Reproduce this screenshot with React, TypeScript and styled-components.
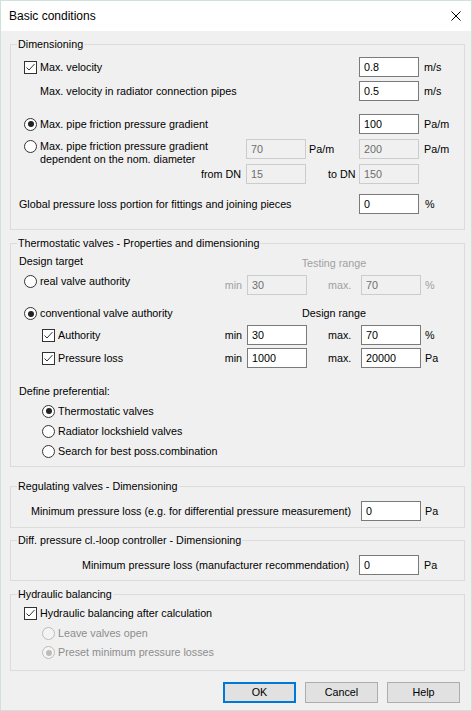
import React from 'react';
import styled, { createGlobalStyle, css } from 'styled-components';

const GlobalStyle = createGlobalStyle`
  html, body {
    margin: 0;
    padding: 0;
    background: #f0f0f0;
  }
  body {
    font-family: "Liberation Sans", Arial, sans-serif;
    font-size: 10.75px;
    line-height: 13px;
    color: #000;
  }
  * { box-sizing: border-box; }
`;

const DIM_COLS = '1fr 60px 53px 60px 45px';
const TRV_COLS = '1fr 60px 54px 60px 43px';

const Window = styled.div`
  width: 472px;
  height: 711px;
  overflow: hidden;
  border: 1px solid #cfe2d9;
  background: #f0f0f0;
  display: flex;
  flex-direction: column;
`;

const TitleBar = styled.div`
  flex: none;
  height: 30px;
  background: #fff;
  display: flex;
  align-items: center;
  justify-content: space-between;
  padding: 0 10px 0 8px;
  font-size: 12px;
`;

const Body = styled.div`
  padding: 7px 6px 0 9px;
  display: flex;
  flex-direction: column;
`;

const Group = styled.fieldset<{ $mt?: number; $pb: number }>`
  margin: ${p => p.$mt ?? 0}px 0 0 0;
  padding: 0 0 ${p => p.$pb}px 8px;
  border: 1px solid #dcdcdc;
  min-width: 0;
  display: flex;
  flex-direction: column;
`;

const Legend = styled.legend`
  padding: 0 1px;
  margin-left: -2px;
  line-height: 13px;
`;

const Row = styled.div<{ $cols: string; $mt?: number; $rows?: string }>`
  display: grid;
  grid-template-columns: ${p => p.$cols};
  grid-template-rows: ${p => p.$rows ?? '20px'};
  row-gap: 5px;
  align-items: center;
  margin-top: ${p => p.$mt ?? 0}px;
`;

const Line = styled.div<{ $mt?: number; $h?: number }>`
  display: flex;
  align-items: center;
  height: ${p => p.$h ?? 20}px;
  margin-top: ${p => p.$mt ?? 0}px;
`;

const EndLine = styled.div<{ $mt: number }>`
  display: flex;
  align-items: center;
  justify-content: flex-end;
  height: 20px;
  margin-top: ${p => p.$mt}px;
`;

const Text = styled.span<{ $indent?: number; $span?: string }>`
  margin-left: ${p => p.$indent ?? 0}px;
  grid-column: ${p => p.$span ?? 'auto'};
  white-space: nowrap;
`;

const Choice = styled.label<{ $indent: number; $span?: string; $area?: string; $top?: number; $off?: boolean }>`
  display: flex;
  align-items: flex-start;
  gap: 3px;
  margin-left: ${p => p.$indent}px;
  margin-top: ${p => p.$top ?? 0}px;
  color: ${p => (p.$off ? '#8d8d8d' : '#000')};
  white-space: nowrap;
  ${p => p.$span && css`grid-column: ${p.$span};`}
  ${p => p.$area && css`
    grid-area: ${p.$area};
    align-self: start;
  `}
`;

const Box = styled.span`
  width: 13px;
  height: 13px;
  flex: none;
  border: 1px solid #333;
  background: #fff;
  display: flex;
  align-items: center;
  justify-content: center;
`;

const Round = styled.span<{ $off?: boolean }>`
  width: 13px;
  height: 13px;
  flex: none;
  border-radius: 50%;
  border: 1px solid ${p => (p.$off ? '#bcbcbc' : '#333')};
  background: ${p => (p.$off ? '#f4f4f4' : '#fff')};
  display: flex;
  align-items: center;
  justify-content: center;
`;

const Dot = styled.span<{ $off?: boolean }>`
  width: 6px;
  height: 6px;
  border-radius: 50%;
  background: ${p => (p.$off ? '#bcbcbc' : '#222')};
`;

const Field = styled.input<{ $off?: boolean; $col?: number; $row?: number; $ml?: number }>`
  width: 60px;
  height: 20px;
  margin: 0 0 0 ${p => p.$ml ?? 0}px;
  padding: 0 0 0 4px;
  border: 1px solid ${p => (p.$off ? '#cccccc' : '#7a7a7a')};
  background: ${p => (p.$off ? '#f0f0f0' : '#fff')};
  color: ${p => (p.$off ? '#6d6d6d' : '#000')};
  font: inherit;
  outline: none;
  grid-column: ${p => p.$col ?? 'auto'};
  grid-row: ${p => p.$row ?? 'auto'};
`;

const Unit = styled.span<{ $pl: number; $dim?: boolean; $w?: number; $col?: number; $row?: number }>`
  padding-left: ${p => p.$pl}px;
  width: ${p => (p.$w ? `${p.$w}px` : 'auto')};
  color: ${p => (p.$dim ? '#a0a0a0' : '#000')};
  white-space: nowrap;
  grid-column: ${p => p.$col ?? 'auto'};
  grid-row: ${p => p.$row ?? 'auto'};
`;

const Side = styled.span<{ $dim?: boolean; $row?: number }>`
  justify-self: end;
  padding-right: 5px;
  grid-row: ${p => p.$row ?? 1};
  grid-column: 1;
  color: ${p => (p.$dim ? '#a0a0a0' : '#000')};
`;

const Caption = styled.span<{ $mt?: number; $dim?: boolean }>`
  grid-column: 2 / 5;
  grid-row: 1;
  justify-self: center;
  color: ${p => (p.$dim ? '#a0a0a0' : '#000')};
  margin-top: ${p => p.$mt ?? 0}px;
`;

const Buttons = styled.div`
  display: flex;
  justify-content: flex-end;
  gap: 9px;
  margin-top: 11px;
  padding-right: 5px;
`;

const Button = styled.button<{ $primary?: boolean }>`
  width: 73px;
  height: 21px;
  margin: 0;
  padding: 0;
  font: inherit;
  color: #000;
  background: #e1e1e1;
  border: ${p => (p.$primary ? '2px solid #0078d7' : '1px solid #adadad')};
`;

function Check() {
  return (
    <Box>
      <svg width="11" height="11" viewBox="0 0 11 11">
        <polyline points="1.5,5.5 4,8 9.5,2" fill="none" stroke="#333" strokeWidth="1" />
      </svg>
    </Box>
  );
}

function Radio({ on, off }: { on?: boolean; off?: boolean }) {
  return <Round $off={off}>{on && <Dot $off={off} />}</Round>;
}

export default function App() {
  return (
    <>
      <GlobalStyle />
      <Window>
        <TitleBar>
          <span>Basic conditions</span>
          <svg width="10" height="10" viewBox="0 0 10 10">
            <path d="M0.5 0.5 L9.5 9.5 M9.5 0.5 L0.5 9.5" stroke="#000" strokeWidth="1" />
          </svg>
        </TitleBar>
        <Body>
          <Group $pb={15}>
            <Legend>Dimensioning</Legend>
            <Row $cols={DIM_COLS} $mt={6}>
              <Choice $indent={5} $span="1 / 4"><Check />Max. velocity</Choice>
              <Field readOnly defaultValue="0.8" $col={4} />
              <Unit $pl={5}>m/s</Unit>
            </Row>
            <Row $cols={DIM_COLS} $mt={4}>
              <Text $indent={21} $span="1 / 4">Max. velocity in radiator connection pipes</Text>
              <Field readOnly defaultValue="0.5" $col={4} />
              <Unit $pl={5}>m/s</Unit>
            </Row>
            <Row $cols={DIM_COLS} $mt={13}>
              <Choice $indent={5} $span="1 / 4"><Radio on />Max. pipe friction pressure gradient</Choice>
              <Field readOnly defaultValue="100" $col={4} />
              <Unit $pl={5}>Pa/m</Unit>
            </Row>
            <Row $cols={DIM_COLS} $mt={5} $rows="20px 20px">
              <Choice $indent={5} $area="1 / 1 / 3 / 2" $top={1}>
                <Radio />
                <span>Max. pipe friction pressure gradient<br />dependent on the nom. diameter</span>
              </Choice>
              <Field readOnly defaultValue="70" $off $col={2} $row={1} />
              <Unit $pl={3} $col={3} $row={1}>Pa/m</Unit>
              <Field readOnly defaultValue="200" $off $col={4} $row={1} />
              <Unit $pl={5} $col={5} $row={1}>Pa/m</Unit>
              <Side $row={2}>from DN</Side>
              <Field readOnly defaultValue="15" $off $col={2} $row={2} />
              <Unit $pl={22} $col={3} $row={2}>to DN</Unit>
              <Field readOnly defaultValue="150" $off $col={4} $row={2} />
            </Row>
            <Row $cols={DIM_COLS} $mt={10}>
              <Text $span="1 / 4">Global pressure loss portion for fittings and joining pieces</Text>
              <Field readOnly defaultValue="0" $col={4} />
              <Unit $pl={6}>%</Unit>
            </Row>
          </Group>

          <Group $mt={7} $pb={5}>
            <Legend>Thermostatic valves - Properties and dimensioning</Legend>
            <Row $cols={TRV_COLS} $mt={5} $rows="13px">
              <Text>Design target</Text>
              <Caption $mt={3} $dim>Testing range</Caption>
            </Row>
            <Row $cols={TRV_COLS} $mt={7}>
              <Choice $indent={5} $area="1 / 1 / 2 / 2"><Radio />real valve authority</Choice>
              <Side $dim>min</Side>
              <Field readOnly defaultValue="30" $off $col={2} $row={1} />
              <Unit $pl={21} $dim $col={3} $row={1}>max.</Unit>
              <Field readOnly defaultValue="70" $off $col={4} $row={1} />
              <Unit $pl={4} $dim $col={5} $row={1}>%</Unit>
            </Row>
            <Row $cols={TRV_COLS} $mt={12} $rows="13px">
              <Choice $indent={5}><Radio on />conventional valve authority</Choice>
              <Caption>Design range</Caption>
            </Row>
            <Row $cols={TRV_COLS} $mt={5}>
              <Choice $indent={23} $area="1 / 1 / 2 / 2" $top={4}><Check />Authority</Choice>
              <Side>min</Side>
              <Field readOnly defaultValue="30" $col={2} $row={1} />
              <Unit $pl={21} $col={3} $row={1}>max.</Unit>
              <Field readOnly defaultValue="70" $col={4} $row={1} />
              <Unit $pl={4} $col={5} $row={1}>%</Unit>
            </Row>
            <Row $cols={TRV_COLS} $mt={3}>
              <Choice $indent={23} $area="1 / 1 / 2 / 2" $top={4}><Check />Pressure loss</Choice>
              <Side>min</Side>
              <Field readOnly defaultValue="1000" $col={2} $row={1} />
              <Unit $pl={21} $col={3} $row={1}>max.</Unit>
              <Field readOnly defaultValue="20000" $col={4} $row={1} />
              <Unit $pl={4} $col={5} $row={1}>Pa</Unit>
            </Row>
            <Line $mt={17} $h={13}>
              <Text>Define preferential:</Text>
            </Line>
            <Line $mt={3}>
              <Choice $indent={23}><Radio on />Thermostatic valves</Choice>
            </Line>
            <Line>
              <Choice $indent={23}><Radio />Radiator lockshield valves</Choice>
            </Line>
            <Line>
              <Choice $indent={23}><Radio />Search for best poss.combination</Choice>
            </Line>
          </Group>

          <Group $mt={13} $pb={6}>
            <Legend>Regulating valves - Dimensioning</Legend>
            <EndLine $mt={8}>
              <Text>Minimum pressure loss (e.g. for differential pressure measurement)</Text>
              <Field readOnly defaultValue="0" $ml={10} />
              <Unit $pl={4} $w={43}>Pa</Unit>
            </EndLine>
          </Group>

          <Group $mt={6} $pb={5}>
            <Legend>Diff. pressure cl.-loop controller - Dimensioning</Legend>
            <EndLine $mt={8}>
              <Text>Minimum pressure loss (manufacturer recommendation)</Text>
              <Field readOnly defaultValue="0" $ml={10} />
              <Unit $pl={5} $w={45}>Pa</Unit>
            </EndLine>
          </Group>

          <Group $mt={7} $pb={8}>
            <Legend>Hydraulic balancing</Legend>
            <Line $mt={6} $h={13}>
              <Choice $indent={5}><Check />Hydraulic balancing after calculation</Choice>
            </Line>
            <Line $mt={4} $h={19}>
              <Choice $indent={23} $off><Radio off />Leave valves open</Choice>
            </Line>
            <Line $h={19}>
              <Choice $indent={23} $off><Radio on off />Preset minimum pressure losses</Choice>
            </Line>
          </Group>

          <Buttons>
            <Button $primary>OK</Button>
            <Button>Cancel</Button>
            <Button>Help</Button>
          </Buttons>
        </Body>
      </Window>
    </>
  );
}
